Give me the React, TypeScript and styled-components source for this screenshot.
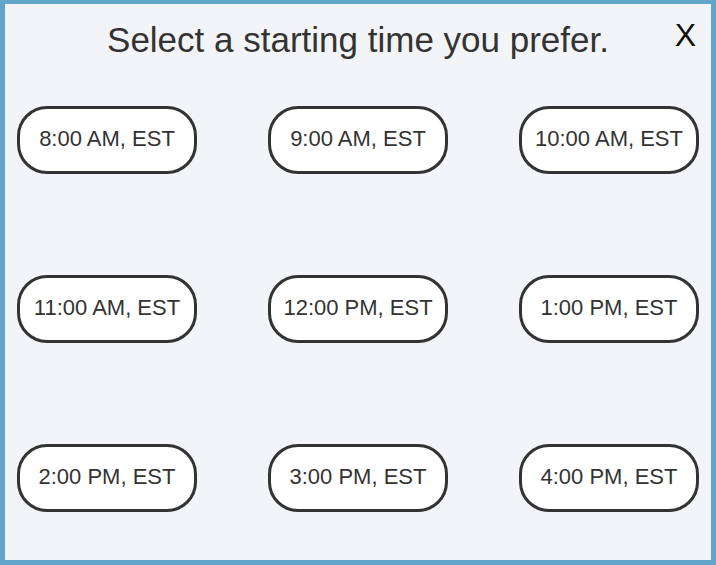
import React from "react";
import styled, { createGlobalStyle } from "styled-components";

const Global = createGlobalStyle`
  html, body { margin: 0; padding: 0; }
  body { font-family: "Liberation Sans", Arial, sans-serif; }
  * { box-sizing: border-box; }
`;

const Dialog = styled.div`
  position: relative;
  width: 716px;
  height: 565px;
  border: 5px solid #62a5c9;
  border-top-width: 4px;
  background: #f3f4f8;
  display: flex;
  flex-direction: column;
  align-items: center;
`;

const Title = styled.h1`
  margin: 16px 0 0 0;
  font-size: 35px;
  line-height: 40px;
  font-weight: 400;
  color: #333333;
`;

const Close = styled.button`
  position: absolute;
  top: 11px;
  right: 15px;
  border: none;
  background: none;
  padding: 0;
  font-family: "Liberation Sans", Arial, sans-serif;
  font-size: 32px;
  line-height: 40px;
  color: #111;
  cursor: pointer;
`;

const Grid = styled.div`
  margin-top: 46px;
  display: grid;
  grid-template-columns: repeat(3, 180px);
  grid-auto-rows: 68px;
  column-gap: 71px;
  row-gap: 101px;
`;

const Slot = styled.button`
  height: 68px;
  width: 180px;
  border: 3px solid #333333;
  border-radius: 30px;
  background: #ffffff;
  font-family: "Liberation Sans", Arial, sans-serif;
  font-size: 22px;
  color: #333333;
  padding: 0 0 2px 0;
  cursor: pointer;
`;

const slots = [
  "8:00 AM, EST",
  "9:00 AM, EST",
  "10:00 AM, EST",
  "11:00 AM, EST",
  "12:00 PM, EST",
  "1:00 PM, EST",
  "2:00 PM, EST",
  "3:00 PM, EST",
  "4:00 PM, EST",
];

export default function App() {
  return (
    <>
      <Global />
      <Dialog>
        <Title>Select a starting time you prefer.</Title>
        <Close aria-label="Close">X</Close>
        <Grid>
          {slots.map((s) => (
            <Slot key={s}>{s}</Slot>
          ))}
        </Grid>
      </Dialog>
    </>
  );
}
